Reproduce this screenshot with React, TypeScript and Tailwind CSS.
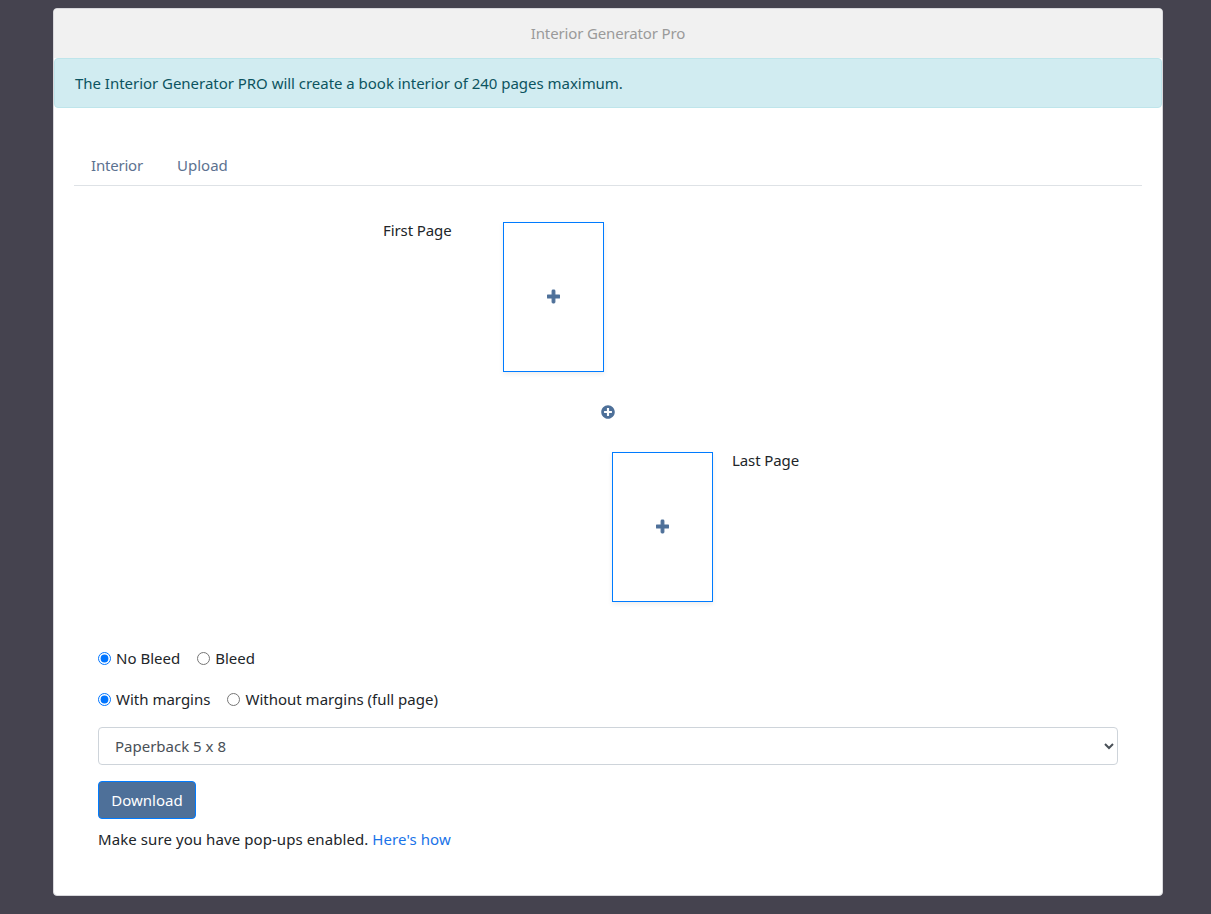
import { FaPlus, FaPlusCircle } from "react-icons/fa";

function PageSlot({ className }: { className: string }) {
  return (
    <div className={`flex h-[150px] w-[101px] shrink-0 items-center justify-center border border-[#007bff] bg-white shadow-[0_2px_5px_rgba(0,0,0,0.08)] ${className}`}>
      <FaPlus className="mb-[1px] h-[15px] w-[13px] stroke-current stroke-[36] text-[#4e7099]" />
    </div>
  );
}

function Radio({ label, name, checked, className }: { label: string; name: string; checked?: boolean; className?: string }) {
  return (
    <label className={`flex items-center ${className ?? ""}`}>
      <input type="radio" name={name} defaultChecked={checked} className="m-0 h-[13px] w-[13px]" />
      <span className="ml-[5px]">{label}</span>
    </label>
  );
}

export default function App() {
  return (
    <div className="min-h-[914px] bg-[#45434f] pl-[53px] pt-2 pb-[18px] font-['Noto_Sans','Open_Sans',sans-serif] text-[15px] leading-6 text-[#212529]">
      <div className="h-[888px] w-[1110px] overflow-hidden rounded border border-[#d8d8dc] bg-white">
        <div className="flex h-[49px] items-center justify-center bg-[#f1f1f1] pb-[2px] tracking-[-0.14px] text-[#9a9a9a]">Interior Generator Pro</div>
        <div className="flex h-[50px] items-center rounded border border-[#bee5eb] bg-[#d1ecf1] px-5 tracking-[-0.03px] text-[#0c5460]">
          The Interior Generator PRO will create a book interior of 240 pages maximum.
        </div>
        <div className="px-5">
          <div className="mt-[41px] flex h-[37px] items-start border-b border-[#dee2e6] text-[#5c7290]">
            <span className="ml-[17px] mt-[4px] w-[52px] tracking-[-0.2px]">Interior</span>
            <span className="ml-[34px] mt-[4px]">Upload</span>
          </div>

          <div className="mt-[36px] flex items-start">
            <span className="ml-[309px] mt-[-4px] w-[120px] tracking-[-0.1px]">First Page</span>
            <PageSlot className="" />
          </div>
          <div className="ml-[527px] mt-[33px] h-[14px]">
            <FaPlusCircle className="h-[14px] w-[14px] text-[#4e7099]" />
          </div>
          <div className="mt-[33px] flex items-start">
            <PageSlot className="ml-[538px]" />
            <span className="ml-[19px] mt-[-4px] tracking-[-0.1px]">Last Page</span>
          </div>

          <div className="ml-6 mt-[44px] flex h-6 items-center">
            <Radio label="No Bleed" name="bleed" checked />
            <Radio label="Bleed" name="bleed" className="ml-[17px]" />
          </div>
          <div className="ml-6 mt-[17px] flex h-6 items-center">
            <Radio label="With margins" name="margins" checked />
            <Radio label="Without margins (full page)" name="margins" className="ml-[17px]" />
          </div>
          <select className="ml-6 mt-4 block h-[38px] w-[1020px] rounded border border-[#ced4da] bg-white pl-3 pr-3 text-[#495057]" defaultValue="a">
            <option value="a">Paperback 5 x 8</option>
          </select>
          <button className="ml-6 mt-4 block h-[38px] w-[98px] rounded border border-[#007bff] bg-[#4e7099] text-white">Download</button>
          <p className="ml-6 mt-2 tracking-[0.08px]">
            Make sure you have pop-ups enabled. <a className="text-[#1a73e8]">Here's how</a>
          </p>
        </div>
      </div>
    </div>
  );
}
